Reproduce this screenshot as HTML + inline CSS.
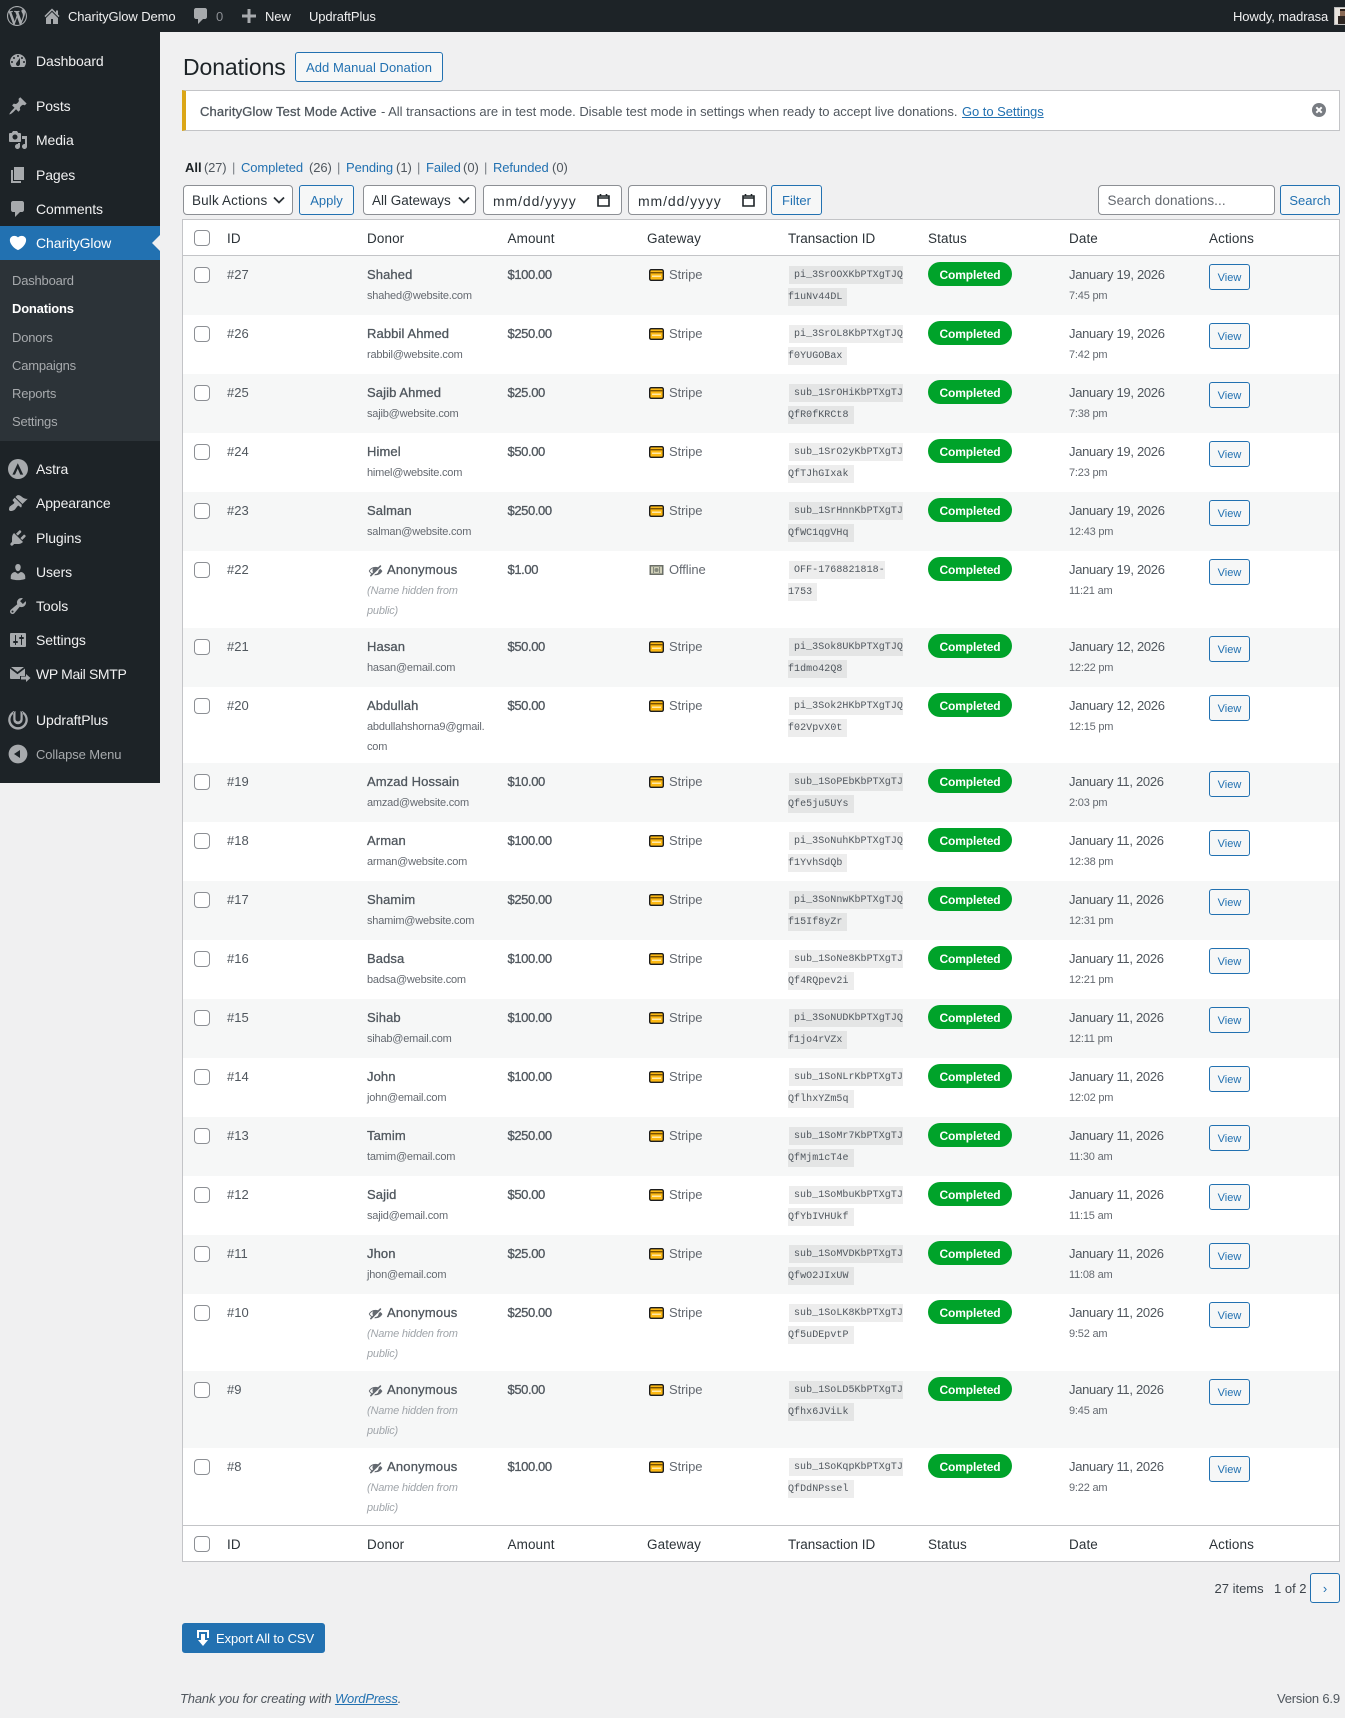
<!DOCTYPE html>
<html lang="en"><head><meta charset="utf-8"><title>Donations</title>
<style>
*{box-sizing:border-box}
html,body{margin:0;padding:0}
body{position:relative;width:1345px;height:1718px;overflow:hidden;background:#f0f0f1;font-family:"Liberation Sans",sans-serif;font-size:13px;color:#50575e}
.a,.t,.r>*{position:absolute}
.t{white-space:nowrap;line-height:20px}
a{color:#2271b1}
svg{position:absolute;display:block}
.i{width:20px;height:20px;fill:#a7aaad}
.m{left:36px;font-size:14px;color:#f0f0f1;letter-spacing:-.1px}
.s{left:12px;color:#a7aaad;letter-spacing:-.2px}
.b{color:#f0f0f1;letter-spacing:-.1px}
.btn{position:absolute;border:1px solid #2271b1;background:#f6f7f7;color:#2271b1;border-radius:3px;text-align:center;height:30px;line-height:30px;white-space:nowrap}
.sel{position:absolute;top:185px;height:30px;border:1px solid #8c8f94;border-radius:4px;background:#fff;color:#2c3338;font-size:13.5px;line-height:30px;white-space:nowrap}
.v{top:158px;color:#50575e}
.vl{top:158px;color:#2271b1;letter-spacing:-.1px}
.sp{top:158px;color:#787c82}
.r{position:absolute;left:183px;width:1156px}
.h{font-size:13.5px;color:#2c3338;white-space:nowrap;line-height:20px;top:9px;letter-spacing:.1px}
.k{left:11px;width:16px;height:16px;border:1px solid #8c8f94;border-radius:4px;background:#fff;top:11px}
.id{left:44px;top:9px;line-height:20px}
.n{left:184px;top:9px;line-height:20px;-webkit-text-stroke:.3px #50575e;letter-spacing:.1px;white-space:nowrap}
.n2{left:204px;top:9px;line-height:20px;-webkit-text-stroke:.3px #50575e;letter-spacing:.2px;white-space:nowrap}
.eye{left:185px;top:12px;width:15px;height:15px;fill:#646970}
.e{left:184px;top:30px;line-height:20px;font-size:11px;letter-spacing:-.2px;color:#646970;white-space:nowrap}
.e2{left:184px;top:50px;line-height:20px;font-size:11px;letter-spacing:-.2px;color:#646970;white-space:nowrap}
.hid{color:#a0a5aa;font-style:italic}
.am{left:324.5px;top:9px;line-height:20px;-webkit-text-stroke:.3px #50575e;letter-spacing:-.4px}
.cd{left:466px;top:13px;width:15px;height:12px}
.gw{left:486px;top:9px;line-height:20px;color:#646970;letter-spacing:-.1px}
.c1,.c2{font-family:"Liberation Mono",monospace;font-size:10px;letter-spacing:.05px;background:rgba(0,0,0,.07);height:18px;line-height:20px;color:#50575e;white-space:nowrap;overflow:hidden}
.c1{left:606px;top:10px;padding-left:5px;width:114px}
.c2{left:605px;top:32px;padding-right:5px}
.st{left:745px;top:6px;width:84px;height:24px;border-radius:12px;background:#00a32a;color:#fff;font-size:12px;font-weight:700;letter-spacing:-.1px;text-align:center;line-height:26px}
.d{left:886px;top:9px;line-height:20px;letter-spacing:-.3px;white-space:nowrap}
.tm{left:886px;top:30px;line-height:20px;font-size:11px;letter-spacing:-.2px;color:#646970;white-space:nowrap}
.vw{left:1026px;top:8px;width:41px;height:26px;border:1px solid #2271b1;border-radius:3px;background:#f6f7f7;color:#2271b1;font-size:11px;text-align:center;line-height:26px}
.z{background:#f6f7f7}
.w{background:#fff}
.y{height:59px}
.x{height:77px}
</style></head><body>
<svg width="0" height="0" style="position:absolute"><defs>
<symbol id="card" viewBox="0 0 15 12"><rect x=".7" y=".7" width="13.600" height="10.600" rx="1.500" fill="#fdb913" stroke="#1d1d1d" stroke-width="1.400"/><rect x="1" y="3" width="13" height="1.400" fill="#7a5200"/><rect x="3" y="6.500" width="9" height="1.500" fill="#ffe9a8"/></symbol>
<symbol id="eye" viewBox="0 0 20 20"><path d="M17.2 3.300l.16.17c.39.39.39 1.020 0 1.410L4.550 17.700c-.39.39-1.030.39-1.410 0l-.17-.17c-.39-.39-.39-1.020 0-1.410l1.590-1.600c-1.570-1-2.760-2.300-3.560-3.930.81-1.650 2.030-2.980 3.640-3.990S8.040 5.090 10 5.090c1.200 0 2.330.21 3.400.6l2.380-2.390c.39-.39 1.030-.39 1.420 0zM2.400 10.590c.69 1.230 1.710 2.250 3.050 3.050l1.280-1.280c-.51-.69-.77-1.470-.77-2.360 0-1.060.36-1.980 1.090-2.760-1.040.27-1.960.7-2.760 1.260-.8.55-1.430 1.240-1.890 2.090zM16.100 7.800c1.300.8 2.400 1.800 3.100 3.100-.8 1.600-2 2.900-3.600 3.900S12 16.300 10 16.300c-.6 0-1.200-.1-1.800-.2l1.500-1.500h.3c1.100 0 2-.4 2.800-1.100.8-.8 1.200-1.700 1.200-2.800v-.3z"/></symbol>
</defs></svg>

<div class="a" style="left:0;top:0;width:1345px;height:32px;background:#1d2327"></div>
<svg class="i" style="left:7px;top:6px" viewBox="0 0 20 20"><path d="M20 10c0-5.51-4.49-10-10-10C4.48 0 0 4.49 0 10c0 5.52 4.48 10 10 10 5.51 0 10-4.48 10-10zM7.78 15.37L4.37 6.22c.55-.02 1.17-.08 1.17-.08.5-.06.44-1.13-.06-1.11 0 0-1.45.11-2.37.11-.18 0-.37 0-.58-.01C4.12 2.69 6.87 1.11 10 1.11c2.33 0 4.45.87 6.05 2.34-.68-.11-1.65.39-1.65 1.58 0 .74.45 1.36.9 2.1.35.61.55 1.36.55 2.46 0 1.49-1.4 5-1.4 5l-3.03-8.37c.54-.02.82-.17.82-.17.5-.05.44-1.25-.06-1.22 0 0-1.44.12-2.38.12-.87 0-2.33-.12-2.33-.12-.5-.03-.56 1.2-.06 1.22l.92.08 1.26 3.41zM17.41 10c.24-.64.74-1.87.43-4.25.7 1.29 1.05 2.71 1.05 4.25 0 3.29-1.73 6.24-4.4 7.78.97-2.59 1.94-5.2 2.92-7.78zM6.1 18.09C3.12 16.65 1.11 13.53 1.11 10c0-1.3.23-2.48.72-3.59C3.25 10.3 4.67 14.2 6.1 18.09zm4.03-6.63l2.58 6.98c-.86.29-1.76.45-2.71.45-.79 0-1.57-.11-2.29-.33.81-2.38 1.62-4.74 2.42-7.1z"/></svg>
<svg class="i" style="left:42px;top:6px" viewBox="0 0 20 20"><path d="M16 8.5l1.53 1.53-1.06 1.06L10 4.62l-6.47 6.47-1.06-1.06L10 2.5l4 4v-2h2v4zm-6-2.46l6 5.99V18H4v-6.03zM11 18v-5H9v5h2z"/></svg>
<div class="t b" style="left:68px;top:7px">CharityGlow Demo</div>
<svg class="i" style="left:191px;top:6px" viewBox="0 0 20 20"><path d="M5 2h9c1.1 0 2 .9 2 2v7c0 1.1-.9 2-2 2h-2l-5 5v-5H5c-1.1 0-2-.9-2-2V4c0-1.1.9-2 2-2z"/></svg>
<div class="t" style="left:216px;top:7px;color:#8c8f94">0</div>
<svg class="i" style="left:239px;top:6px" viewBox="0 0 20 20"><path d="M17 8.5v3h-5.5V17h-3v-5.5H3v-3h5.5V3h3v5.5z"/></svg>
<div class="t b" style="left:265px;top:7px">New</div>
<div class="t b" style="left:309px;top:7px">UpdraftPlus</div>
<div class="t b" style="left:1233px;top:7px">Howdy, madrasa</div>
<div class="a" style="left:1334px;top:7px;width:16px;height:18px;background:#e8e4de;border:1px solid #bbb"><div class="a" style="left:5px;top:1px;width:9px;height:7px;background:#8a6a55;border-top:2px solid #2a1f1a"></div><div class="a" style="left:3px;top:8px;width:11px;height:8px;background:#2e2622"></div></div>

<div class="a" style="left:0;top:32px;width:160px;height:751px;background:#1d2327"></div>
<div class="a" style="left:0;top:226px;width:160px;height:34px;background:#2271b1"></div>
<div class="a" style="left:0;top:260px;width:160px;height:181px;background:#2c3338"></div>
<div class="a" style="left:152px;top:235px;width:0;height:0;border-style:solid;border-width:8px 8px 8px 0;border-color:transparent #f0f0f1 transparent transparent"></div>

<svg class="i" style="left:8px;top:51px" viewBox="0 0 20 20"><path fill-rule="evenodd" d="M3.76 16h12.48c1.1-1.37 1.76-3.11 1.76-5 0-4.42-3.58-8-8-8s-8 3.58-8 8c0 1.89.66 3.63 1.76 5zM10 4c.55 0 1 .45 1 1s-.45 1-1 1-1-.45-1-1 .45-1 1-1zM6 6c.55 0 1 .45 1 1s-.45 1-1 1-1-.45-1-1 .45-1 1-1zm8 0c.55 0 1 .45 1 1s-.45 1-1 1-1-.45-1-1 .45-1 1-1zm-5.37 5.55L12 7v6c0 1.1-.9 2-2 2s-2-.9-2-2c0-.57.24-1.08.63-1.45zM4 10c.55 0 1 .45 1 1s-.45 1-1 1-1-.45-1-1 .45-1 1-1zm12 0c.55 0 1 .45 1 1s-.45 1-1 1-1-.45-1-1 .45-1 1-1z"/></svg>
<div class="t m" style="top:51px">Dashboard</div>
<svg class="i" style="left:8px;top:96px" viewBox="0 0 20 20"><path d="M10.44 3.02l1.82-1.82 6.36 6.35-1.83 1.82c-1.05-.68-2.48-.57-3.41.36l-.75.75c-.92.93-1.04 2.35-.35 3.41l-1.83 1.82-2.41-2.41-2.8 2.79c-.42.42-3.38 2.71-3.8 2.29s1.86-3.39 2.28-3.81l2.79-2.79L4.1 9.36l1.83-1.82c1.05.69 2.48.57 3.4-.36l.75-.75c.93-.92 1.05-2.35.36-3.41z"/></svg>
<div class="t m" style="top:96px">Posts</div>
<svg class="i" style="left:8px;top:130px" viewBox="0 0 20 20"><path fill-rule="evenodd" d="M13 11V4c0-.55-.45-1-1-1h-1.67L9 1H5L3.67 3H2c-.55 0-1 .45-1 1v7c0 .55.45 1 1 1h10c.55 0 1-.45 1-1zM7 4.5c1.38 0 2.5 1.12 2.5 2.5S8.38 9.5 7 9.5 4.5 8.38 4.5 7 5.62 4.5 7 4.5zM14 6h5v10.5c0 1.38-1.12 2.5-2.5 2.5S14 17.88 14 16.5s1.12-2.5 2.5-2.5c.17 0 .34.02.5.05V9h-3V6zm-4 8.05V13h2v3.5c0 1.38-1.12 2.5-2.5 2.5S7 17.88 7 16.5 8.12 14 9.5 14c.17 0 .34.02.5.05z"/></svg>
<div class="t m" style="top:130px">Media</div>
<svg class="i" style="left:8px;top:165px" viewBox="0 0 20 20"><path d="M6 15V2h10v13H6zm-1 1h8v2H3V5h2v11z"/></svg>
<div class="t m" style="top:165px">Pages</div>
<svg class="i" style="left:8px;top:199px" viewBox="0 0 20 20"><path d="M5 2h9c1.1 0 2 .9 2 2v7c0 1.1-.9 2-2 2h-2l-5 5v-5H5c-1.1 0-2-.9-2-2V4c0-1.1.9-2 2-2z"/></svg>
<div class="t m" style="top:199px">Comments</div>
<svg class="i" style="left:8px;top:233px;fill:#fff" viewBox="0 0 20 20"><path d="M10 17.12c3.33-1.4 5.74-3.79 7.04-6.21 1.28-2.41 1.46-4.81.32-6.25-1.03-1.29-2.37-1.78-3.73-1.74s-2.68.63-3.63 1.46c-.95-.83-2.27-1.42-3.63-1.46s-2.7.45-3.73 1.74c-1.14 1.44-.96 3.84.34 6.25 1.28 2.42 3.69 4.81 7.02 6.21z"/></svg>
<div class="t m" style="top:233px;color:#fff">CharityGlow</div>
<div class="t s" style="top:271px">Dashboard</div>
<div class="t s" style="top:299px;color:#fff;font-weight:700">Donations</div>
<div class="t s" style="top:328px">Donors</div>
<div class="t s" style="top:356px">Campaigns</div>
<div class="t s" style="top:384px">Reports</div>
<div class="t s" style="top:412px">Settings</div>

<svg class="i" style="left:8px;top:459px" viewBox="0 0 20 20"><path fill-rule="evenodd" d="M10 0a10 10 0 1 0 0 20 10 10 0 0 0 0-20zM9.8 4.2l5.4 11.4h-2.9l-2.6-6-2.7 6H4.4z"/></svg>
<div class="t m" style="top:459px">Astra</div>
<svg class="i" style="left:8px;top:493px" viewBox="0 0 20 20"><path d="M14.48 11.06L7.41 3.99l1.5-1.5c.5-.56 2.3-.47 3.51.32 1.21.8 1.43 1.28 2.91 2.1 1.18.64 2.45 1.26 4.45.85zm-.71.71L6.7 4.7 4.93 6.47c-.39.39-.39 1.02 0 1.41l1.06 1.06c.39.39.39 1.03 0 1.42-.6.6-1.43 1.11-2.21 1.69-.35.26-.7.53-1.01.84C1.43 13.23.91 15.04 1 17c.17.2.87.8 1 .99 1.96.09 3.77-.43 5.14-1.8.31-.31.58-.66.84-1.01.58-.78 1.09-1.61 1.69-2.21.39-.39 1.03-.39 1.42 0l1.06 1.06c.39.39 1.02.39 1.41 0z"/></svg>
<div class="t m" style="top:493px">Appearance</div>
<svg class="i" style="left:8px;top:528px" viewBox="0 0 20 20"><path d="M13.11 4.36L9.87 7.6 8 5.73l3.24-3.24c.35-.34 1.05-.2 1.56.32.52.51.66 1.21.31 1.55zm-8 1.77l.91-1.12 9.01 9.01-1.19.84c-.71.71-2.63 1.16-3.82 1.16H6.14L4.9 17.26c-.59.59-1.54.59-2.12 0-.59-.58-.59-1.53 0-2.12l1.24-1.24v-3.88c0-1.13.4-3.19 1.09-3.89zm7.26 3.97l3.24-3.24c.34-.35 1.04-.21 1.55.31.52.51.66 1.21.31 1.55l-3.24 3.25z"/></svg>
<div class="t m" style="top:528px">Plugins</div>
<svg class="i" style="left:8px;top:562px" viewBox="0 0 20 20"><path d="M10 9.25c-2.27 0-2.73-3.44-2.73-3.44C7 4.02 7.82 2 9.97 2c2.16 0 2.98 2.02 2.71 3.81 0 0-.41 3.44-2.68 3.44zm0 2.57L12.72 10c2.39 0 4.52 2.33 4.52 4.53v2.49s-3.65 1.13-7.24 1.13c-3.65 0-7.24-1.13-7.24-1.13v-2.49c0-2.25 1.94-4.48 4.47-4.48z"/></svg>
<div class="t m" style="top:562px">Users</div>
<svg class="i" style="left:8px;top:596px" viewBox="0 0 20 20"><path fill-rule="evenodd" d="M16.68 9.77c-1.34 1.34-3.3 1.67-4.95.99l-5.41 6.52c-.99.99-2.59.99-3.58 0s-.99-2.59 0-3.57l6.52-5.42c-.68-1.65-.35-3.61.99-4.95 1.28-1.28 3.12-1.62 4.72-1.06l-2.89 2.89 2.82 2.82 2.86-2.87c.53 1.58.18 3.39-1.08 4.65zM3.81 16.21c.4.39 1.04.39 1.43 0 .4-.4.4-1.04 0-1.43-.39-.4-1.03-.4-1.43 0-.39.39-.39 1.03 0 1.43z"/></svg>
<div class="t m" style="top:596px">Tools</div>
<svg class="i" style="left:8px;top:630px" viewBox="0 0 20 20"><path fill-rule="evenodd" d="M18 16V4c0-.55-.45-1-1-1H3c-.55 0-1 .45-1 1v12c0 .55.45 1 1 1h14c.55 0 1-.45 1-1zM8 11h1c.55 0 1 .45 1 1s-.45 1-1 1H8v1.5c0 .28-.22.5-.5.5s-.5-.22-.5-.5V13H6c-.55 0-1-.45-1-1s.45-1 1-1h1V5.5c0-.28.22-.5.5-.5s.5.22.5.5V11zm5-2h-1c-.55 0-1-.45-1-1s.45-1 1-1h1V5.5c0-.28.22-.5.5-.5s.5.22.5.5V7h1c.55 0 1 .45 1 1s-.45 1-1 1h-1v5.5c0 .28-.22.5-.5.5s-.5-.22-.5-.5V9z"/></svg>
<div class="t m" style="top:630px">Settings</div>
<svg class="i" style="left:9px;top:664px;width:22px;height:20px" viewBox="0 0 22 20"><path d="M2 3h13l-6.5 5L2 3zM1 4.5V14c0 .6.4 1 1 1h9v-3h5V4.500l-7.500 5.700L1 4.500zM17 10l4.500 4-4.500 4v-2.500h-5v-3h5V10z"/></svg>
<div class="t m" style="top:664px;letter-spacing:-.35px">WP Mail SMTP</div>
<svg class="i" style="left:8px;top:710px" viewBox="0 0 20 20"><path fill-rule="evenodd" d="M6 .9A9.800 9.800 0 1 0 14 .9v2.400a7.500 7.500 0 1 1-8 0V.9zM7.500 1v8a2.500 2.500 0 0 0 5 0V1l2.200 1.200V9.500a4.700 4.700 0 0 1-9.400 0V2.200z"/></svg>
<div class="t m" style="top:710px">UpdraftPlus</div>
<svg class="i" style="left:8px;top:744px" viewBox="0 0 20 20"><path fill-rule="evenodd" d="M10 .6C4.810.6.600 4.810.600 10s4.210 9.400 9.400 9.400 9.400-4.210 9.400-9.400S15.190.6 10 .6zM12 14l-6-4 6-4v8z"/></svg>
<div class="t" style="left:36px;top:745px;color:#a7aaad;letter-spacing:-.1px">Collapse Menu</div>

<div class="t" style="left:183px;top:54px;font-size:23px;line-height:26px;color:#1d2327;letter-spacing:-.1px">Donations</div>
<div class="btn" style="left:295px;top:52px;width:148px;letter-spacing:.05px">Add Manual Donation</div>

<div class="a" style="left:182px;top:90px;width:1158px;height:41px;background:#fff;border:1px solid #c3c4c7;border-left:4px solid #dba617"></div>
<div class="t" style="left:200px;top:102px;-webkit-text-stroke:.3px #50575e;letter-spacing:.15px;color:#50575e">CharityGlow Test Mode Active</div>
<div class="t" style="left:381px;top:102px;letter-spacing:-.03px;color:#50575e">- All transactions are in test mode. Disable test mode in settings when ready to accept live donations.</div>
<a class="t" style="left:962px;top:102px;letter-spacing:-.05px;text-decoration:underline">Go to Settings</a>
<svg style="left:1312px;top:103px;width:14px;height:14px" viewBox="0 0 14 14"><circle cx="7" cy="7" r="7" fill="#787c82"/><path d="M4.300 4.300l5.400 5.400M9.700 4.300l-5.400 5.400" stroke="#fff" stroke-width="2"/></svg>

<div class="t v" style="left:185px;color:#1d2327;font-weight:700">All</div>
<div class="t v" style="left:204px;letter-spacing:-.2px">(27)</div>
<div class="t sp" style="left:232px">|</div>
<div class="t vl" style="left:241px">Completed</div>
<div class="t v" style="left:309px;letter-spacing:-.1px">(26)</div>
<div class="t sp" style="left:337px">|</div>
<div class="t vl" style="left:346px">Pending</div>
<div class="t v" style="left:396px">(1)</div>
<div class="t sp" style="left:417px">|</div>
<div class="t vl" style="left:426px">Failed</div>
<div class="t v" style="left:463px">(0)</div>
<div class="t sp" style="left:484px">|</div>
<div class="t vl" style="left:493px">Refunded</div>
<div class="t v" style="left:552px">(0)</div>

<div class="sel" style="left:183px;width:110px;padding-left:8px;letter-spacing:.15px">Bulk Actions<svg style="left:89px;top:8px;width:12px;height:12px" viewBox="0 0 12 12"><path d="M1 3.500l5 5 5-5" fill="none" stroke="#2c3338" stroke-width="1.800"/></svg></div>
<div class="btn" style="left:299px;top:185px;width:55px">Apply</div>
<div class="sel" style="left:363px;width:113px;padding-left:8px">All Gateways<svg style="left:94px;top:8px;width:12px;height:12px" viewBox="0 0 12 12"><path d="M1 3.500l5 5 5-5" fill="none" stroke="#2c3338" stroke-width="1.800"/></svg></div>
<div class="sel" style="left:483px;width:139px;padding-left:9px;font-size:14px;letter-spacing:.9px">mm/dd/yyyy<svg style="left:113px;top:7px;width:13px;height:14px" viewBox="0 0 13 14"><path d="M1 3h11v10H1zM1 5h11M3.500 1v2M9.500 1v2" fill="none" stroke="#1d2327" stroke-width="1.600"/></svg></div>
<div class="sel" style="left:628px;width:139px;padding-left:9px;font-size:14px;letter-spacing:.9px">mm/dd/yyyy<svg style="left:113px;top:7px;width:13px;height:14px" viewBox="0 0 13 14"><path d="M1 3h11v10H1zM1 5h11M3.500 1v2M9.500 1v2" fill="none" stroke="#1d2327" stroke-width="1.600"/></svg></div>
<div class="btn" style="left:771px;top:185px;width:51px">Filter</div>
<div class="sel" style="left:1098px;width:177px;padding-left:8.500px;color:#646970;letter-spacing:.1px">Search donations...</div>
<div class="btn" style="left:1280px;top:185px;width:60px">Search</div>

<div class="a" style="left:182px;top:219px;width:1158px;height:1343px;background:#fff;border:1px solid #c3c4c7"></div>

<div class="r" style="top:220px;height:36px;border-bottom:1px solid #c3c4c7">
<div class="k" style="top:10px"></div>
<div class="h" style="left:44px">ID</div><div class="h" style="left:184px">Donor</div><div class="h" style="left:324.500px">Amount</div><div class="h" style="left:464px">Gateway</div><div class="h" style="left:605px;letter-spacing:0">Transaction ID</div><div class="h" style="left:745px">Status</div><div class="h" style="left:886px">Date</div><div class="h" style="left:1026px">Actions</div>
</div>

<div class="r z y" style="top:256px"><div class="k"></div><div class="id">#27</div><div class="n">Shahed</div><div class="e">shahed@website.com</div><div class="am">$100.00</div><svg class="cd"><use href="#card"/></svg><div class="gw">Stripe</div><div class="c1">pi_3SrOOXKbPTXgTJQ</div><div class="c2">f1uNv44DL</div><div class="st">Completed</div><div class="d">January 19, 2026</div><div class="tm">7:45 pm</div><div class="vw">View</div></div>
<div class="r w y" style="top:315px"><div class="k"></div><div class="id">#26</div><div class="n">Rabbil Ahmed</div><div class="e">rabbil@website.com</div><div class="am">$250.00</div><svg class="cd"><use href="#card"/></svg><div class="gw">Stripe</div><div class="c1">pi_3SrOL8KbPTXgTJQ</div><div class="c2">f0YUGOBax</div><div class="st">Completed</div><div class="d">January 19, 2026</div><div class="tm">7:42 pm</div><div class="vw">View</div></div>
<div class="r z y" style="top:374px"><div class="k"></div><div class="id">#25</div><div class="n">Sajib Ahmed</div><div class="e">sajib@website.com</div><div class="am">$25.00</div><svg class="cd"><use href="#card"/></svg><div class="gw">Stripe</div><div class="c1">sub_1SrOHiKbPTXgTJ</div><div class="c2">QfR0fKRCt8</div><div class="st">Completed</div><div class="d">January 19, 2026</div><div class="tm">7:38 pm</div><div class="vw">View</div></div>
<div class="r w y" style="top:433px"><div class="k"></div><div class="id">#24</div><div class="n">Himel</div><div class="e">himel@website.com</div><div class="am">$50.00</div><svg class="cd"><use href="#card"/></svg><div class="gw">Stripe</div><div class="c1">sub_1SrO2yKbPTXgTJ</div><div class="c2">QfTJhGIxak</div><div class="st">Completed</div><div class="d">January 19, 2026</div><div class="tm">7:23 pm</div><div class="vw">View</div></div>
<div class="r z y" style="top:492px"><div class="k"></div><div class="id">#23</div><div class="n">Salman</div><div class="e">salman@website.com</div><div class="am">$250.00</div><svg class="cd"><use href="#card"/></svg><div class="gw">Stripe</div><div class="c1">sub_1SrHnnKbPTXgTJ</div><div class="c2">QfWC1qgVHq</div><div class="st">Completed</div><div class="d">January 19, 2026</div><div class="tm">12:43 pm</div><div class="vw">View</div></div>
<div class="r w x" style="top:551px"><div class="k"></div><div class="id">#22</div><svg class="eye"><use href="#eye"/></svg><div class="n2">Anonymous</div><div class="e hid">(Name hidden from</div><div class="e2 hid">public)</div><div class="am">$1.00</div><svg class="cd" viewBox="0 0 15 12"><rect x=".5" y="1" width="14" height="10" fill="#6b6f68"/><rect x="2" y="2.500" width="11" height="7" fill="#cfcfb8"/><circle cx="7.500" cy="6" r="2" fill="#85897c"/><rect x="4" y="3" width="1" height="6" fill="#85897c"/><rect x="10" y="3" width="1" height="6" fill="#85897c"/></svg><div class="gw">Offline</div><div class="c1" style="width:96px">OFF-1768821818-</div><div class="c2">1753</div><div class="st">Completed</div><div class="d">January 19, 2026</div><div class="tm">11:21 am</div><div class="vw">View</div></div>
<div class="r z y" style="top:628px"><div class="k"></div><div class="id">#21</div><div class="n">Hasan</div><div class="e">hasan@email.com</div><div class="am">$50.00</div><svg class="cd"><use href="#card"/></svg><div class="gw">Stripe</div><div class="c1">pi_3Sok8UKbPTXgTJQ</div><div class="c2">f1dmo42Q8</div><div class="st">Completed</div><div class="d">January 12, 2026</div><div class="tm">12:22 pm</div><div class="vw">View</div></div>
<div class="r w" style="top:687px;height:76px"><div class="k"></div><div class="id">#20</div><div class="n">Abdullah</div><div class="e">abdullahshorna9@gmail.</div><div class="e2">com</div><div class="am">$50.00</div><svg class="cd"><use href="#card"/></svg><div class="gw">Stripe</div><div class="c1">pi_3Sok2HKbPTXgTJQ</div><div class="c2">f02VpvX0t</div><div class="st">Completed</div><div class="d">January 12, 2026</div><div class="tm">12:15 pm</div><div class="vw">View</div></div>
<div class="r z y" style="top:763px"><div class="k"></div><div class="id">#19</div><div class="n">Amzad Hossain</div><div class="e">amzad@website.com</div><div class="am">$10.00</div><svg class="cd"><use href="#card"/></svg><div class="gw">Stripe</div><div class="c1">sub_1SoPEbKbPTXgTJ</div><div class="c2">Qfe5ju5UYs</div><div class="st">Completed</div><div class="d">January 11, 2026</div><div class="tm">2:03 pm</div><div class="vw">View</div></div>
<div class="r w y" style="top:822px"><div class="k"></div><div class="id">#18</div><div class="n">Arman</div><div class="e">arman@website.com</div><div class="am">$100.00</div><svg class="cd"><use href="#card"/></svg><div class="gw">Stripe</div><div class="c1">pi_3SoNuhKbPTXgTJQ</div><div class="c2">f1YvhSdQb</div><div class="st">Completed</div><div class="d">January 11, 2026</div><div class="tm">12:38 pm</div><div class="vw">View</div></div>
<div class="r z y" style="top:881px"><div class="k"></div><div class="id">#17</div><div class="n">Shamim</div><div class="e">shamim@website.com</div><div class="am">$250.00</div><svg class="cd"><use href="#card"/></svg><div class="gw">Stripe</div><div class="c1">pi_3SoNnwKbPTXgTJQ</div><div class="c2">f15If8yZr</div><div class="st">Completed</div><div class="d">January 11, 2026</div><div class="tm">12:31 pm</div><div class="vw">View</div></div>
<div class="r w y" style="top:940px"><div class="k"></div><div class="id">#16</div><div class="n">Badsa</div><div class="e">badsa@website.com</div><div class="am">$100.00</div><svg class="cd"><use href="#card"/></svg><div class="gw">Stripe</div><div class="c1">sub_1SoNe8KbPTXgTJ</div><div class="c2">Qf4RQpev2i</div><div class="st">Completed</div><div class="d">January 11, 2026</div><div class="tm">12:21 pm</div><div class="vw">View</div></div>
<div class="r z y" style="top:999px"><div class="k"></div><div class="id">#15</div><div class="n">Sihab</div><div class="e">sihab@email.com</div><div class="am">$100.00</div><svg class="cd"><use href="#card"/></svg><div class="gw">Stripe</div><div class="c1">pi_3SoNUDKbPTXgTJQ</div><div class="c2">f1jo4rVZx</div><div class="st">Completed</div><div class="d">January 11, 2026</div><div class="tm">12:11 pm</div><div class="vw">View</div></div>
<div class="r w y" style="top:1058px"><div class="k"></div><div class="id">#14</div><div class="n">John</div><div class="e">john@email.com</div><div class="am">$100.00</div><svg class="cd"><use href="#card"/></svg><div class="gw">Stripe</div><div class="c1">sub_1SoNLrKbPTXgTJ</div><div class="c2">QflhxYZm5q</div><div class="st">Completed</div><div class="d">January 11, 2026</div><div class="tm">12:02 pm</div><div class="vw">View</div></div>
<div class="r z y" style="top:1117px"><div class="k"></div><div class="id">#13</div><div class="n">Tamim</div><div class="e">tamim@email.com</div><div class="am">$250.00</div><svg class="cd"><use href="#card"/></svg><div class="gw">Stripe</div><div class="c1">sub_1SoMr7KbPTXgTJ</div><div class="c2">QfMjm1cT4e</div><div class="st">Completed</div><div class="d">January 11, 2026</div><div class="tm">11:30 am</div><div class="vw">View</div></div>
<div class="r w y" style="top:1176px"><div class="k"></div><div class="id">#12</div><div class="n">Sajid</div><div class="e">sajid@email.com</div><div class="am">$50.00</div><svg class="cd"><use href="#card"/></svg><div class="gw">Stripe</div><div class="c1">sub_1SoMbuKbPTXgTJ</div><div class="c2">QfYbIVHUkf</div><div class="st">Completed</div><div class="d">January 11, 2026</div><div class="tm">11:15 am</div><div class="vw">View</div></div>
<div class="r z y" style="top:1235px"><div class="k"></div><div class="id">#11</div><div class="n">Jhon</div><div class="e">jhon@email.com</div><div class="am">$25.00</div><svg class="cd"><use href="#card"/></svg><div class="gw">Stripe</div><div class="c1">sub_1SoMVDKbPTXgTJ</div><div class="c2">QfwO2JIxUW</div><div class="st">Completed</div><div class="d">January 11, 2026</div><div class="tm">11:08 am</div><div class="vw">View</div></div>
<div class="r w x" style="top:1294px"><div class="k"></div><div class="id">#10</div><svg class="eye"><use href="#eye"/></svg><div class="n2">Anonymous</div><div class="e hid">(Name hidden from</div><div class="e2 hid">public)</div><div class="am">$250.00</div><svg class="cd"><use href="#card"/></svg><div class="gw">Stripe</div><div class="c1">sub_1SoLK8KbPTXgTJ</div><div class="c2">Qf5uDEpvtP</div><div class="st">Completed</div><div class="d">January 11, 2026</div><div class="tm">9:52 am</div><div class="vw">View</div></div>
<div class="r z x" style="top:1371px"><div class="k"></div><div class="id">#9</div><svg class="eye"><use href="#eye"/></svg><div class="n2">Anonymous</div><div class="e hid">(Name hidden from</div><div class="e2 hid">public)</div><div class="am">$50.00</div><svg class="cd"><use href="#card"/></svg><div class="gw">Stripe</div><div class="c1">sub_1SoLD5KbPTXgTJ</div><div class="c2">Qfhx6JViLk</div><div class="st">Completed</div><div class="d">January 11, 2026</div><div class="tm">9:45 am</div><div class="vw">View</div></div>
<div class="r w x" style="top:1448px"><div class="k"></div><div class="id">#8</div><svg class="eye"><use href="#eye"/></svg><div class="n2">Anonymous</div><div class="e hid">(Name hidden from</div><div class="e2 hid">public)</div><div class="am">$100.00</div><svg class="cd"><use href="#card"/></svg><div class="gw">Stripe</div><div class="c1">sub_1SoKqpKbPTXgTJ</div><div class="c2">QfDdNPssel</div><div class="st">Completed</div><div class="d">January 11, 2026</div><div class="tm">9:22 am</div><div class="vw">View</div></div>

<div class="r" style="top:1525px;height:36px;border-top:1px solid #c3c4c7;background:#fff">
<div class="k" style="top:10px"></div>
<div class="h" style="left:44px">ID</div><div class="h" style="left:184px">Donor</div><div class="h" style="left:324.500px">Amount</div><div class="h" style="left:464px">Gateway</div><div class="h" style="left:605px;letter-spacing:0">Transaction ID</div><div class="h" style="left:745px">Status</div><div class="h" style="left:886px">Date</div><div class="h" style="left:1026px">Actions</div>
</div>

<div class="t" style="left:1214.500px;top:1579px;color:#3c434a">27 items</div>
<div class="t" style="left:1274px;top:1579px;color:#3c434a">1 of 2</div>
<div class="btn" style="left:1310px;top:1573px;width:30px">›</div>

<div class="a" style="left:182px;top:1623px;width:143px;height:30px;background:#2271b1;border-radius:3px"></div>
<svg style="left:193px;top:1628px;width:20px;height:20px;fill:#fff" viewBox="0 0 20 20"><path d="M14.010 4v6h2V2H4v8h2.010V4h8zm-2 2v6h3l-5 6-5-6h3V6h4z"/></svg>
<div class="t" style="left:216px;top:1629px;color:#fff;letter-spacing:-.1px">Export All to CSV</div>

<div class="t" style="left:180px;top:1689px;font-style:italic;letter-spacing:-.17px">Thank you for creating with <a style="text-decoration:underline">WordPress</a>.</div>
<div class="t" style="left:1277px;top:1689px;letter-spacing:-.2px">Version 6.9</div>
</body></html>
